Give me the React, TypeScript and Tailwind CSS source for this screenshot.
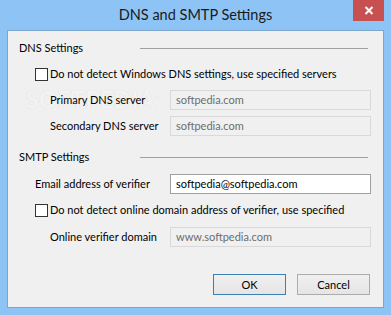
import React from "react";

const font = { fontFamily: 'Lato, "Noto Sans", sans-serif' };

function Checkbox() {
  return <div className="w-[13px] h-[13px] border border-[#333333] bg-white shrink-0" />;
}

function Section({ title }: { title: string }) {
  return (
    <div className="flex items-center h-4 pl-[11px] pr-[15px]">
      <span className="w-[121px] shrink-0 whitespace-nowrap">{title}</span>
      <div className="flex-1 border-t border-[#a0a0a0]" />
    </div>
  );
}

function Field({ label, value, disabled, indent }: { label: string; value: string; disabled?: boolean; indent: string }) {
  return (
    <div className="flex items-center h-[20px]">
      <span className={`${indent} shrink-0 whitespace-nowrap relative`}>{label}</span>
      <div
        className={
          disabled
            ? "w-[201px] h-[20px] border border-[#d9d9d9] bg-[#f0f0f0] text-[#6d6d6d] flex items-center pl-[5px]"
            : "w-[201px] h-[20px] border border-[#a0a0a0] bg-white text-black flex items-center pl-[5px]"
        }
      >
        {value}
      </div>
    </div>
  );
}

export default function App() {
  return (
    <div className="w-[391px] h-[315px] bg-[#8ec4f5] flex flex-col px-[7px] pb-[7px] relative" style={font}>
      <div className="h-[30px] flex items-center justify-center relative">
        <span className="text-[14.5px] text-[#1a1a1a] mt-[-1px]">DNS and SMTP Settings</span>
        <div className="absolute right-[0px] top-0 w-[31px] h-[21px] bg-[#c75050] flex items-center justify-center">
          <svg width="10" height="9" viewBox="0 0 10 9">
            <path d="M1.5 1 L8.5 8 M8.5 1 L1.5 8" stroke="white" strokeWidth="2" />
          </svg>
        </div>
      </div>
      <div className="flex-1 bg-[#f0f0f0] border border-[#7ea6cc] text-[11px] text-black flex flex-col relative leading-4">
        <div className="absolute left-[18px] top-[58px] text-[22px] leading-[22px] font-bold tracking-[1px] text-white/70 pointer-events-none whitespace-nowrap" style={{ textShadow: "0 0 1px rgba(190,190,190,0.5)" }}>
          SOFTPEDIA<span className="text-[8px] align-top">™</span>
        </div>
        <div className="mt-[9px]"><Section title="DNS Settings" /></div>
        <div className="mt-[10px] flex items-center gap-[2px] pl-[27px] h-4">
          <Checkbox />
          <span className="whitespace-nowrap">Do not detect Windows DNS settings, use specified servers</span>
        </div>
        <div className="mt-[8px]"><Field label="Primary DNS server" value="softpedia.com" disabled indent="pl-[42px] w-[162px]" /></div>
        <div className="mt-[6px]"><Field label="Secondary DNS server" value="softpedia.com" disabled indent="pl-[42px] w-[162px]" /></div>
        <div className="mt-[13px]"><Section title="SMTP Settings" /></div>
        <div className="mt-[9px]"><Field label="Email address of verifier" value="softpedia@softpedia.com" indent="pl-[27px] w-[162px]" /></div>
        <div className="mt-[8px] flex items-center gap-[2px] pl-[27px] h-4">
          <Checkbox />
          <span className="whitespace-nowrap">Do not detect online domain address of verifier, use specified</span>
        </div>
        <div className="mt-[9px]"><Field label="Online verifier domain" value="www.softpedia.com" disabled indent="pl-[42px] w-[162px]" /></div>
        <div className="mt-[27px] flex justify-end gap-[11px] pr-[13px]">
          <div className="w-[73px] h-[21px] border border-[#3c7fb1] bg-gradient-to-b from-[#f0f0f0] to-[#e5e5e5] flex items-center justify-center">OK</div>
          <div className="w-[73px] h-[21px] border border-[#acacac] bg-gradient-to-b from-[#f0f0f0] to-[#e5e5e5] flex items-center justify-center">Cancel</div>
        </div>
      </div>
    </div>
  );
}
